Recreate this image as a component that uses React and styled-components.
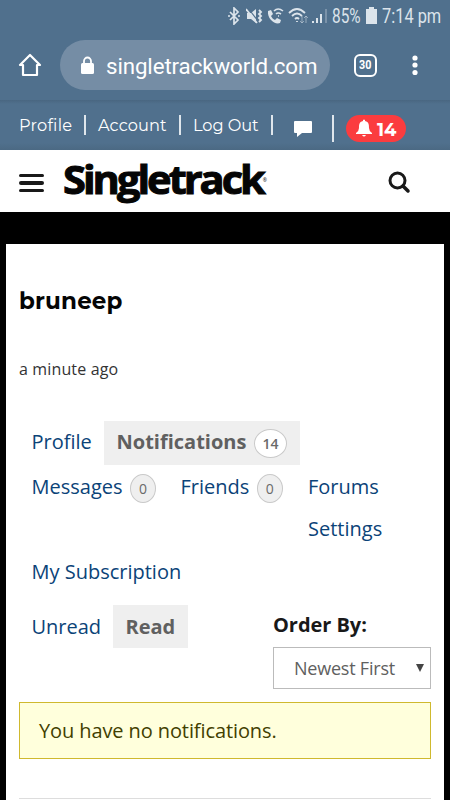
import React from "react";
import styled, { createGlobalStyle } from "styled-components";

const Global = createGlobalStyle`
  * { box-sizing: border-box; }
  html, body { margin: 0; background: #000; }
  body { width: 450px; height: 800px; overflow: hidden; font-family: "Open Sans", sans-serif; }
`;

const Screen = styled.div`
  width: 450px;
  height: 800px;
  overflow: hidden;
  background: #000;
`;

const StatusBar = styled.div`
  height: 34px;
  background: #50708d;
  color: #dce4eb;
  display: flex;
  align-items: center;
  padding: 0 0 3px 228px;
`;

const StatusText = styled.span`
  font: 400 19.5px/24px Roboto, sans-serif;
  width: ${(p) => p.$width}px;
  margin: 2px 0 0 ${(p) => p.$gap}px;
  white-space: nowrap;
  transform: scaleX(${(p) => p.$scale});
  transform-origin: left center;
`;

const StatusIcon = styled.svg`
  flex: none;
  margin-left: ${(p) => p.$gap || 0}px;
  fill: none;
  stroke: currentColor;
`;

const BrowserBar = styled.div`
  height: 66px;
  background: #50708d;
  display: flex;
  align-items: center;
  padding: 0 0 4px 18px;
  color: #fff;
`;

const AddressBar = styled.div`
  width: 270px;
  height: 50px;
  margin-left: 18px;
  border-radius: 25px;
  background: #758da5;
  display: flex;
  align-items: center;
  padding-left: 20px;
`;

const Address = styled.span`
  font: 400 22.3px/28px Roboto, sans-serif;
  letter-spacing: ${(p) => p.$spacing}px;
  margin: 1px 0 0 11px;
  white-space: nowrap;
`;

const TabCount = styled.div`
  flex: none;
  width: 23px;
  height: 23px;
  margin-left: 24px;
  border: 2px solid #fff;
  border-radius: 6px;
  display: flex;
  align-items: center;
  justify-content: center;
`;

const TabNumber = styled.span`
  font: 700 12.5px/18px Roboto, sans-serif;
  transform: scaleX(0.86);
`;

const MenuDots = styled.svg`
  margin-left: 35px;
  fill: #fff;
`;

const AccountBar = styled.nav`
  height: 50px;
  background: linear-gradient(#496681, #50708d 4px, #50708d 43px, #4b6983);
  display: flex;
  align-items: flex-start;
  padding-left: 19px;
  color: #fff;
`;

const AccountLink = styled.a`
  width: ${(p) => p.$width}px;
  margin-top: 14px;
  font: 400 16.2px/22px Montserrat, Lato, sans-serif;
  letter-spacing: ${(p) => p.$spacing}px;
  white-space: nowrap;
`;

const Divider = styled.span`
  width: 2px;
  height: ${(p) => p.$height || 20}px;
  margin: 15px ${(p) => p.$after || 0}px 0 ${(p) => p.$before}px;
  background: #dfe6ec;
`;

const ChatIcon = styled.svg`
  margin: 20px 0 0 20px;
  fill: #fff;
`;

const AlertPill = styled.div`
  width: 60px;
  height: 27px;
  margin: 15px 0 0 12px;
  border-radius: 14px;
  background: #fb3c3f;
  display: flex;
  align-items: center;
  padding-left: 10px;
  font: 700 18px/27px Montserrat, Lato, sans-serif;
  gap: 5px;
`;

const AlertCount = styled.span`
  margin-top: 3px;
`;

const Header = styled.header`
  height: 62px;
  background: #fff;
  display: flex;
  align-items: center;
  padding-left: 19px;
`;

const Hamburger = styled.div`
  width: 25px;
  display: grid;
  gap: 4.2px;
  margin-top: 4px;
`;

const MenuLine = styled.span`
  height: 3.5px;
  border-radius: 2px;
  background: #191919;
`;

const Logo = styled.div`
  display: flex;
  width: 204px;
  height: 44px;
  margin: 0 0 6px 19px;
  color: #050505;
`;

const LogoText = styled.span`
  font: 700 40px/45px "Open Sans", sans-serif;
  letter-spacing: -2.9px;
  -webkit-text-stroke: 1px #050505;
  white-space: nowrap;
  transform: scaleX(1.04);
  transform-origin: left center;
`;

const Registered = styled.span`
  font: 400 5px/6px "Open Sans", sans-serif;
  margin: 21px 0 0 auto;
`;

const SearchIcon = styled.svg`
  margin: 2px 0 0 121px;
  fill: none;
  stroke: #191919;
`;

const Card = styled.main`
  width: 438px;
  height: 556px;
  margin: 32px 6px 0;
  background: #fff;
  padding: 0 13px;
  color: #20252a;
`;

const UserName = styled.h1`
  margin: 0;
  padding-top: 41px;
  height: 112px;
  font: 700 23px/32px Montserrat, Lato, sans-serif;
  letter-spacing: ${(p) => p.$spacing}px;
  color: #050505;
`;

const Activity = styled.p`
  margin: 0;
  height: 65px;
  font-size: 16px;
  line-height: 26px;
  letter-spacing: 0.14px;
  color: #333;
`;

const Tabs = styled.nav`
  display: flex;
  align-items: center;
  height: ${(p) => p.$height}px;
  padding-left: ${(p) => p.$indent || 0}px;
`;

const Tab = styled.a`
  display: flex;
  align-items: center;
  flex: none;
  width: ${(p) => p.$width || 180}px;
  height: 100%;
  padding: 0 12.5px ${(p) => p.$lift || 1}px;
  color: ${(p) => (p.$active ? "#606060" : "#0b4378")};
  background: ${(p) => (p.$active ? "#efefef" : "transparent")};
  font-weight: ${(p) => (p.$active ? 700 : 400)};
  font-size: 20px;
  letter-spacing: ${(p) => p.$spacing || 0}px;
  white-space: nowrap;
`;

const Count = styled.span`
  flex: none;
  width: ${(p) => (p.$wide ? 33 : 26)}px;
  height: 29px;
  margin: 4px 0 0 7.5px;
  border: 1px solid #c9c9c9;
  border-radius: 50%;
  background: ${(p) => (p.$wide ? "#fff" : "#efefef")};
  color: #6a6a6a;
  font-size: 14px;
  font-weight: ${(p) => (p.$wide ? 600 : 400)};
  line-height: 28px;
  text-align: center;
  letter-spacing: 0;
`;

const Filters = styled.section`
  display: flex;
  justify-content: space-between;
  height: 109px;
  padding-top: 12px;
`;

const Order = styled.div`
  width: 158px;
`;

const OrderLabel = styled.div`
  height: 42px;
  font-size: 20px;
  font-weight: 700;
  line-height: 39px;
  letter-spacing: -0.05px;
  color: #191919;
`;

const Select = styled.div`
  height: 42px;
  border: 1px solid #bbb;
  padding: 0 6px 0 20px;
  display: flex;
  align-items: center;
  justify-content: space-between;
  font-size: 18px;
  letter-spacing: -0.22px;
  color: #606060;
`;

const Notice = styled.div`
  height: 57px;
  border: 1px solid #cfb92e;
  background: #ffffdc;
  padding-left: 19px;
  font-size: 20px;
  line-height: 56px;
  letter-spacing: -0.1px;
  color: #424000;
`;

const Rule = styled.hr`
  border: 0;
  height: 1px;
  margin: 39px 0 0;
  background: #ddd;
`;

export default function App() {
  return (
    <Screen>
      <Global />
      <StatusBar>
        <StatusIcon width="12" height="18" viewBox="0 0 12 18" strokeWidth="1.7"><path d="m2 5 8 8-4 4V1l4 4-8 8" /><path d="M0 9h2M10 9h2" /></StatusIcon>
        <StatusIcon $gap={6} width="17" height="18" viewBox="0 0 17 18"><path fill="currentColor" stroke="none" d="M1 6h4l5-4v14l-5-4H1z" /><path stroke="#50708d" d="m2 1 10 13" strokeWidth="1.2" /><path d="m0 2 11 14" strokeWidth="1.7" /><path d="m13 3 2 2-2 2 2 2-2 2 2 2-2 2" strokeWidth="1.9" /></StatusIcon>
        <StatusIcon $gap={4} width="17" height="18" viewBox="0 0 17 18"><path fill="currentColor" stroke="none" d="m1 4 3-1 2 4-2 2c1 2 2 3 4 4l2-2 4 2-1 3c-5 2-13-4-12-12z" /><path d="M7 4q4-4 9 0M9 7q2-2 5 0M11 9h1" strokeWidth="1.6" /></StatusIcon>
        <StatusIcon $gap={4} width="21" height="18" viewBox="0 0 21 18"><path d="M1 6Q9-2 17 6M4 9q5-5 10 0M7 12q2-2 4 0M9 14v1" strokeWidth="1.8" /><path opacity=".5" d="M14 9v7m-2-2 2 2 2-2M18 16V9m-2 2 2-2 2 2" /></StatusIcon>
        <StatusIcon $gap={3} width="15" height="18" viewBox="0 0 15 18" strokeWidth="2"><path d="M1 14v2M5 11v5M9 7v9" /><path opacity=".4" d="M14 2v14" strokeWidth="1.5" /></StatusIcon>
        <StatusText $gap={5} $width={30} $scale={0.79}>85%</StatusText>
        <StatusIcon $gap={4} width="11" height="17" viewBox="0 0 11 17"><path fill="currentColor" stroke="none" d="M3 0h5v2h3v15H0V2h3z" /></StatusIcon>
        <StatusText $gap={5} $width={60} $scale={0.84}>7:14 pm</StatusText>
      </StatusBar>
      <BrowserBar>
        <svg width="24" height="24" viewBox="0 0 24 24" fill="none" stroke="#fff" strokeWidth="2.2" strokeLinejoin="round" strokeLinecap="round"><path d="M2 12 12 2l10 10h-3v10H5V12z" /></svg>
        <AddressBar>
          <svg width="15" height="19" viewBox="0 0 15 19"><rect x="1" y="7" width="13" height="11" rx="1.5" fill="#fff" /><path d="M4 8V5a3.5 3.5 0 0 1 7 0v3" fill="none" stroke="#fff" strokeWidth="1.8" /></svg>
          <Address $spacing={-0.1}>singletrackworld.com</Address>
        </AddressBar>
        <TabCount><TabNumber>30</TabNumber></TabCount>
        <MenuDots width="6" height="22" viewBox="0 0 6 22"><circle cx="3" cy="4" r="2.6" /><circle cx="3" cy="11" r="2.6" /><circle cx="3" cy="18.5" r="2.6" /></MenuDots>
      </BrowserBar>
      <AccountBar>
        <AccountLink $width={53} $spacing={0.23}>Profile</AccountLink>
        <Divider $before={12} $after={12} />
        <AccountLink $width={69} $spacing={0.08}>Account</AccountLink>
        <Divider $before={12} $after={12} />
        <AccountLink $width={66} $spacing={-0.05}>Log Out</AccountLink>
        <Divider $before={12} />
        <ChatIcon width="20" height="18" viewBox="0 0 20 18"><path d="M2 1h16q1 0 1 1v10q0 1-1 1H9l-5 4v-4H2q-1 0-1-1V2q0-1 1-1" /></ChatIcon>
        <Divider $before={19} $height={27} />
        <AlertPill>
          <svg width="16" height="19" viewBox="0 0 16 19" fill="#fff"><path d="M7 1q1-1 2 0v1c4 1 4 4 4 7q0 3 3 5v1H0v-1q3-2 3-5c0-3 0-6 4-7zM6 16h4q-2 3-4 0" /></svg>
          <AlertCount>14</AlertCount>
        </AlertPill>
      </AccountBar>
      <Header>
        <Hamburger><MenuLine /><MenuLine /><MenuLine /></Hamburger>
        <Logo><LogoText>Singletrack</LogoText><Registered>®</Registered></Logo>
        <SearchIcon width="23" height="23" viewBox="0 0 23 23"><circle cx="9.5" cy="9.5" r="7.5" strokeWidth="3" /><path d="m15 15 5 5" strokeWidth="3.5" strokeLinecap="round" /></SearchIcon>
      </Header>
      <Card>
        <UserName $spacing={0.15}>bruneep</UserName>
        <Activity>a minute ago</Activity>
        <Tabs $height={44}>
          <Tab $width={85} $lift={3}>Profile</Tab>
          <Tab $active $width={196} $lift={3}>Notifications<Count $wide>14</Count></Tab>
        </Tabs>
        <Tabs $height={44}>
          <Tab $width={149}>Messages<Count>0</Count></Tab>
          <Tab $width={127.5}>Friends<Count>0</Count></Tab>
          <Tab $width={100}>Forums</Tab>
        </Tabs>
        <Tabs $height={41} $indent={276.5}><Tab $width={100} $lift={3}>Settings</Tab></Tabs>
        <Tabs $height={43}><Tab>My Subscription</Tab></Tabs>
        <Filters>
          <Tabs $height={43}>
            <Tab $width={94}>Unread</Tab>
            <Tab $active $width={75}>Read</Tab>
          </Tabs>
          <Order>
            <OrderLabel>Order By:</OrderLabel>
            <Select>
              <span>Newest First</span>
              <svg width="8" height="8" viewBox="0 0 8 8"><path d="M0 0h8L4 8z" fill="#444" /></svg>
            </Select>
          </Order>
        </Filters>
        <Notice>You have no notifications.</Notice>
        <Rule />
      </Card>
    </Screen>
  );
}
